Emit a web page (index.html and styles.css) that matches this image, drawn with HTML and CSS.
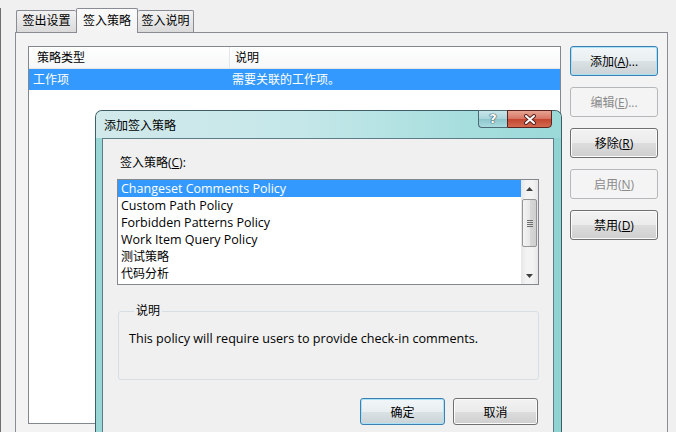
FILE: index.html
```html
<!DOCTYPE html>
<html lang="zh-CN">
<head>
    <meta charset="UTF-8">
    <title>签入策略</title>
    <link rel="stylesheet" href="styles.css">
</head>
<body>
    <div class="window">
        <!-- Tabs -->
        <div class="tabs">
            <div class="tab tab-out">签出设置</div>
            <div class="tab tab-in active">签入策略</div>
            <div class="tab tab-note">签入说明</div>
        </div>

        <!-- Policy page -->
        <div class="panel">
            <div class="list">
                <div class="list-head">
                    <div class="col-type">策略类型</div>
                    <div class="col-desc">说明</div>
                </div>
                <div class="list-row selected">
                    <div class="col-type">工作项</div>
                    <div class="col-desc">需要关联的工作项。</div>
                </div>
            </div>
            <div class="side-buttons">
                <button class="btn default">添加(<u>A</u>)...</button>
                <button class="btn" disabled>编辑(<u>E</u>)...</button>
                <button class="btn">移除(<u>R</u>)</button>
                <button class="btn" disabled>启用(<u>N</u>)</button>
                <button class="btn">禁用(<u>D</u>)</button>
            </div>
        </div>
    </div>

    <!-- Add policy dialog -->
    <div class="dialog">
        <div class="dialog-title">
            <span class="title-text">添加签入策略</span>
            <div class="caption-buttons">
                <div class="cap-help">?</div>
                <div class="cap-close">
                    <svg width="14" height="11" viewBox="0 0 14 11">
                        <path d="M3 2 L11 9 M11 2 L3 9" stroke="#5a2320" stroke-width="4" stroke-linecap="round"/>
                        <path d="M3 2 L11 9 M11 2 L3 9" stroke="#fff" stroke-width="2" stroke-linecap="round"/>
                    </svg>
                </div>
            </div>
        </div>
        <div class="dialog-body">
            <div class="field-label">签入策略(<u>C</u>):</div>
            <div class="listbox">
                <div class="items">
                    <div class="item selected">Changeset Comments Policy</div>
                    <div class="item">Custom Path Policy</div>
                    <div class="item">Forbidden Patterns Policy</div>
                    <div class="item">Work Item Query Policy</div>
                    <div class="item cjk">测试策略</div>
                    <div class="item cjk">代码分析</div>
                </div>
                <div class="scrollbar">
                    <div class="scroll-btn">
                        <svg width="7" height="4" viewBox="0 0 7 4"><path d="M0 4 L3.5 0 L7 4 Z" fill="#404040"/></svg>
                    </div>
                    <div class="scroll-track">
                        <div class="thumb">
                            <span></span><span></span><span></span><span></span>
                        </div>
                    </div>
                    <div class="scroll-btn">
                        <svg width="7" height="4" viewBox="0 0 7 4"><path d="M0 0 L7 0 L3.5 4 Z" fill="#404040"/></svg>
                    </div>
                </div>
            </div>

            <fieldset class="group">
                <legend>说明</legend>
                <p class="desc">This policy will require users to provide check-in comments.</p>
            </fieldset>

            <div class="dialog-buttons">
                <button class="btn default small">确定</button>
                <button class="btn small">取消</button>
            </div>
        </div>
    </div>
</body>
</html>
```

FILE: styles.css
```css
/* General Styles */
body {
    margin: 0;
    width: 676px;
    height: 432px;
    overflow: hidden;
    position: relative;
    background: #f0f0f0;
    font-family: "Open Sans", "Noto Sans CJK SC", sans-serif;
    font-size: 12px;
    color: #000;
}

.window {
    height: 432px;
    border-left: 1px solid #6f6f6f;
}

/* Tabs */
.tabs {
    display: flex;
    align-items: flex-end;
    height: 24px;
    margin-top: 8px;
    padding-left: 15px;
}

.tab {
    box-sizing: border-box;
    height: 22px;
    line-height: 20px;
    text-align: center;
    border: 1px solid #898c95;
    border-bottom: none;
    border-radius: 2px 2px 0 0;
    background: linear-gradient(#f2f2f2, #e6e6e6 50%, #dadada);
}

.tab-out { width: 60px; border-right: none; }
.tab-in { width: 62px; }
.tab-note { width: 56px; border-left: none; }

.tab.active {
    position: relative;
    z-index: 1;
    height: 25px;
    line-height: 24px;
    margin-bottom: -1px;
    background: linear-gradient(#fbfbfb, #f3f3f3);
}

/* Page */
.panel {
    box-sizing: border-box;
    display: flex;
    gap: 9px;
    width: 653px;
    height: 400px;
    margin-left: 14px;
    padding: 13px 0 0 12px;
    border: 1px solid #898c95;
    border-bottom: none;
    background: #f3f3f3;
}

.list {
    box-sizing: border-box;
    width: 533px;
    height: 378px;
    border: 1px solid #828790;
    background: #fff;
}

.list-head {
    display: flex;
    height: 21px;
    line-height: 21px;
    border-bottom: 1px solid #e5e5e5;
    background: linear-gradient(#ffffff, #f6f7f8);
}

.list-head .col-type {
    box-sizing: border-box;
    width: 201px;
    padding-left: 8px;
    border-right: 1px solid #e3e8ee;
}

.list-head .col-desc {
    padding-left: 5px;
}

.list-row {
    display: flex;
    height: 21px;
    line-height: 21px;
}

.list-row .col-type {
    box-sizing: border-box;
    width: 201px;
    padding-left: 4px;
}

.list-row .col-desc {
    padding-left: 2px;
}

.list-row.selected {
    background: #3399ff;
    color: #fff;
}

.side-buttons {
    display: flex;
    flex-direction: column;
    gap: 11px;
}

/* Buttons */
.btn {
    box-sizing: border-box;
    width: 88px;
    height: 30px;
    padding: 0;
    font: inherit;
    color: #000;
    border: 1px solid #707070;
    border-radius: 3px;
    box-shadow: inset 0 0 0 1px #fbfbfb;
    background: linear-gradient(#f2f2f2, #ebebeb 50%, #dddddd 51%, #cfcfcf);
}

.btn.default {
    border-color: #3c7fb1;
    box-shadow: inset 0 0 0 1px #a9e2f7;
    background: linear-gradient(#f1f6f8, #e9eef1 50%, #dbe2e6 51%, #ccd3d6);
}

.btn:disabled {
    color: #8a8a8a;
    border-color: #b5b8ba;
    box-shadow: none;
    background: #f4f4f4;
}

.btn.small {
    width: 85px;
    height: 27px;
}

/* Dialog */
.dialog {
    position: absolute;
    left: 95px;
    top: 110px;
    box-sizing: border-box;
    width: 467px;
    height: 322px;
    border: 1px solid #3e5d66;
    border-bottom: none;
    border-radius: 7px 7px 0 0;
    background: linear-gradient(to right, #98d7d6, #a8dddd 50%, #8fd4d2);
}

.dialog-title {
    display: flex;
    height: 27px;
    padding-left: 8px;
    border-radius: 6px 6px 0 0;
    background: linear-gradient(to right, #d2e9eb, #c4e7e9 45%, #a6dedd 80%, #9ad9d8);
}

.title-text {
    align-self: center;
    margin-top: 1px;
}

.caption-buttons {
    display: flex;
    align-self: flex-start;
    margin: -1px 9px 0 auto;
}

.cap-help {
    box-sizing: border-box;
    width: 29px;
    height: 18px;
    line-height: 16px;
    text-align: center;
    font: bold 13px "DejaVu Sans", sans-serif;
    color: #fff;
    text-shadow: 0 0 1px #2d4650, 0 0 1px #2d4650, 0 0 1px #2d4650;
    border: 1px solid #4d6a74;
    border-right: none;
    border-radius: 0 0 0 4px;
    background: linear-gradient(#c9e6ea, #a9d4da 50%, #8ec5cc 51%, #a7dbdf);
}

.cap-close {
    box-sizing: border-box;
    display: flex;
    align-items: center;
    justify-content: center;
    width: 45px;
    height: 18px;
    border: 1px solid #5b2320;
    border-radius: 0 0 4px 0;
    background: linear-gradient(#e8a493, #d77362 50%, #c4452f 51%, #d26a4f);
}

.dialog-body {
    box-sizing: border-box;
    height: 294px;
    margin: 0 7px 0 6px;
    padding: 16px 14px 0 14px;
    border: 1px solid #5f7d88;
    border-bottom: none;
    background: #f0f0f0;
}

.field-label {
    line-height: 16px;
    padding-left: 3px;
}

.listbox {
    box-sizing: border-box;
    display: flex;
    width: 422px;
    height: 106px;
    margin-top: 8px;
    border: 1px solid #828790;
    background: #fff;
}

.items {
    flex: 1;
}

.item {
    height: 17px;
    line-height: 17px;
    padding-left: 3px;
    font-size: 12.5px;
}

.item.cjk {
    font-size: 12px;
}

.item.selected {
    background: #3399ff;
    color: #fff;
}

.scrollbar {
    display: flex;
    flex-direction: column;
    width: 17px;
    background: linear-gradient(to right, #e6e6e6, #f3f3f3 30%, #f3f3f3 70%, #e6e6e6);
}

.scroll-btn {
    display: flex;
    align-items: center;
    justify-content: center;
    height: 17px;
}

.scroll-track {
    flex: 1;
    padding: 2px 1px 0;
}

.thumb {
    box-sizing: border-box;
    display: flex;
    flex-direction: column;
    align-items: center;
    justify-content: center;
    gap: 1px;
    height: 48px;
    border: 1px solid #959595;
    border-radius: 2px;
    background: linear-gradient(to right, #f4f4f4, #e8e8e8 50%, #d8d8d8 51%, #cfcfcf);
}

.thumb span {
    width: 6px;
    height: 1px;
    background: #6f6f6f;
}

.group {
    box-sizing: border-box;
    width: 421px;
    height: 76px;
    margin: 19px 0 0 1px;
    padding: 0 10px;
    border: 1px solid #d5dfe5;
    border-radius: 3px;
}

.group legend {
    margin-left: 5px;
    padding: 0 2px;
    line-height: 14px;
}

.desc {
    margin: 13px 0 0;
    line-height: 16px;
    font-size: 12.6px;
}

.dialog-buttons {
    display: flex;
    justify-content: flex-end;
    gap: 8px;
    margin-top: 18px;
    padding-right: 1px;
}
```
